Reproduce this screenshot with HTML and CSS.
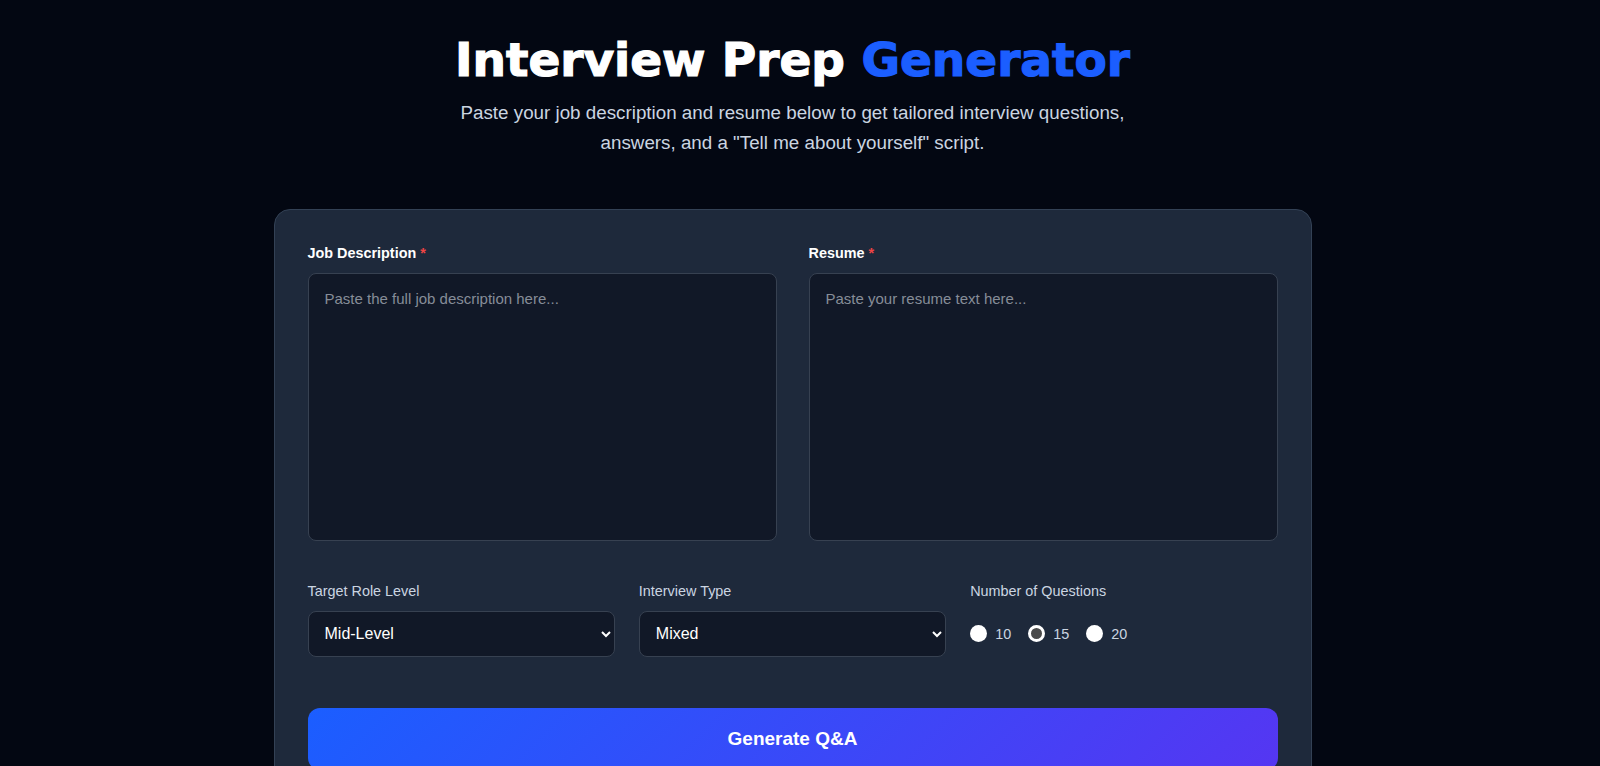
FILE: index.html
```html
<!DOCTYPE html>
<html lang="en">
<head>
    <meta charset="UTF-8">
    <meta name="viewport" content="width=device-width, initial-scale=1.0">
    <title>Interview Prep Generator</title>
    <link rel="stylesheet" href="styles.css">
</head>
<body>
    <div class="page">
        <div class="header">
            <h1>Interview Prep <span class="accent">Generator</span></h1>
            <p>Paste your job description and resume below to get tailored interview questions, answers, and a "Tell me about yourself" script.</p>
        </div>

        <form class="card" onsubmit="return false">
            <div class="text-fields">
                <div class="field">
                    <label for="jobDescription">Job Description <span class="required">*</span></label>
                    <textarea id="jobDescription" placeholder="Paste the full job description here..."></textarea>
                </div>
                <div class="field">
                    <label for="resume">Resume <span class="required">*</span></label>
                    <textarea id="resume" placeholder="Paste your resume text here..."></textarea>
                </div>
            </div>

            <div class="options">
                <div class="option">
                    <label for="roleLevel">Target Role Level</label>
                    <select id="roleLevel">
                        <option>Entry-Level</option>
                        <option selected>Mid-Level</option>
                        <option>Senior</option>
                        <option>Lead / Manager</option>
                    </select>
                </div>
                <div class="option">
                    <label for="interviewType">Interview Type</label>
                    <select id="interviewType">
                        <option>Behavioral</option>
                        <option>Technical</option>
                        <option selected>Mixed</option>
                    </select>
                </div>
                <div class="option">
                    <label>Number of Questions</label>
                    <div class="radio-group">
                        <label class="radio"><input type="radio" name="count" value="10"> 10</label>
                        <label class="radio"><input type="radio" name="count" value="15" checked> 15</label>
                        <label class="radio"><input type="radio" name="count" value="20"> 20</label>
                    </div>
                </div>
            </div>

            <button type="submit" class="generate-btn">Generate Q&amp;A</button>
        </form>
    </div>
</body>
</html>
```

FILE: styles.css
```css
:root {
    --page: #030712;
    --card: #1e293b;
    --card-border: #334155;
    --field: #111827;
    --field-border: #374151;
    --muted: #cbd5e1;
    --blue: #1b5eff;
    --violet: #5536f2;
    color-scheme: dark;
}

* {
    box-sizing: border-box;
}

body {
    margin: 0;
    background: var(--page);
    color: white;
    font-family: 'Liberation Sans', Arial, sans-serif;
}

.page {
    padding: 32px 39px 60px 24px;
}

.header {
    text-align: center;
    margin-bottom: 50px;
}

.header h1 {
    margin: 0 0 10px;
    font-family: 'Arial Black', 'DejaVu Sans', sans-serif;
    font-size: 47px;
    font-weight: 900;
    line-height: 1.2;
    -webkit-text-stroke: 1.2px currentColor;
}

.header .accent {
    color: var(--blue);
}

.header p {
    max-width: 700px;
    margin: 0 auto;
    font-size: 18.8px;
    line-height: 1.6;
    color: var(--muted);
}

.card {
    max-width: 1038px;
    margin: 0 auto;
    padding: 33px;
    background: var(--card);
    border: 1px solid var(--card-border);
    border-radius: 16px;
}

.text-fields {
    display: grid;
    grid-template-columns: 1fr 1fr;
    gap: 32px;
}

.field label {
    display: block;
    margin-bottom: 10px;
    font-size: 14.4px;
    font-weight: 700;
    line-height: 20px;
}

.required {
    color: #ef4444;
}

textarea,
select {
    width: 100%;
    background: var(--field);
    border: 1px solid var(--field-border);
    border-radius: 8px;
    color: white;
    font-family: inherit;
}

textarea {
    display: block;
    height: 268px;
    padding: 16px;
    font-size: 15px;
    resize: none;
}

textarea::placeholder {
    color: #868d98;
}

textarea:focus,
select:focus {
    outline: none;
    border-color: var(--blue);
}

.options {
    display: grid;
    grid-template-columns: repeat(3, 1fr);
    gap: 24px;
    margin-top: 40px;
}

.option > label {
    display: block;
    margin-bottom: 10px;
    font-size: 14.4px;
    line-height: 20px;
    color: var(--muted);
}

select {
    height: 46px;
    padding: 0 6px 0 12px;
    font-size: 16px;
}

.radio-group {
    display: flex;
    align-items: center;
    gap: 17px;
    height: 46px;
}

.radio {
    display: flex;
    align-items: center;
    gap: 8px;
    font-size: 14.4px;
    color: var(--muted);
    cursor: pointer;
}

.radio input {
    appearance: none;
    width: 17px;
    height: 17px;
    margin: 0;
    border-radius: 50%;
    background: white;
    cursor: pointer;
}

.radio input:checked {
    background: #4a4a4a;
    border: 3px solid white;
}

.generate-btn {
    display: block;
    width: 100%;
    margin-top: 51px;
    padding: 20px;
    border: none;
    border-radius: 12px;
    background: linear-gradient(135deg, var(--blue), var(--violet));
    color: white;
    font-family: inherit;
    font-size: 19px;
    font-weight: 700;
    line-height: 22px;
    cursor: pointer;
}

.generate-btn:hover {
    filter: brightness(1.08);
}
```
